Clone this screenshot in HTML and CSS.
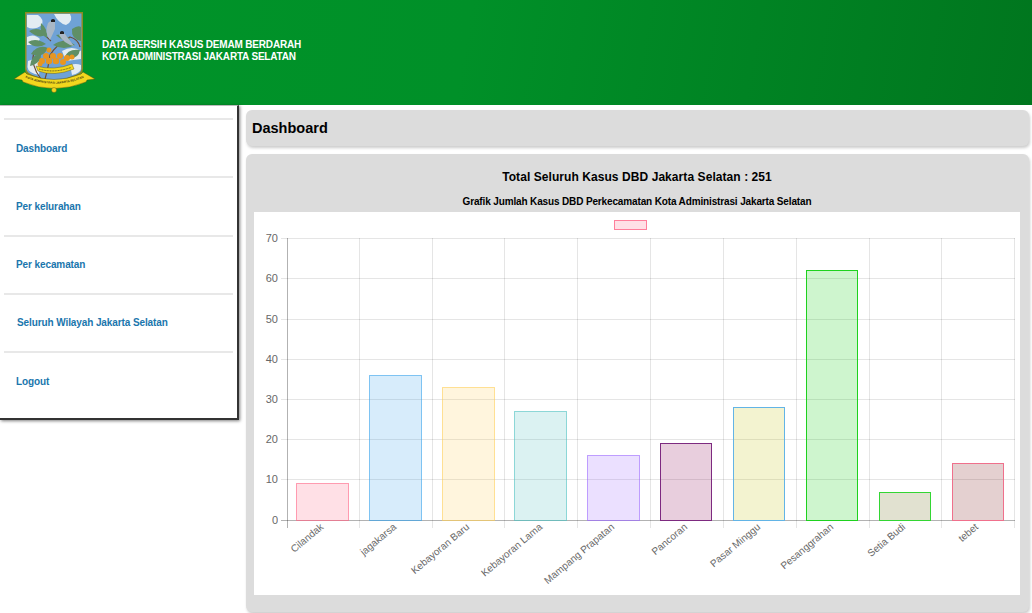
FILE: index.html
```html
<!DOCTYPE html>
<html lang="en">
<head>
  <meta charset="UTF-8" />
  <meta name="viewport" content="width=device-width, initial-scale=1.0" />
  <title>Data Bersih Kasus Demam Berdarah</title>
  <link rel="stylesheet" href="styles.css">
</head>
<body>
  <header class="topbar">
    <svg class="logo" width="82" height="84" viewBox="0 0 82 84">
      <path class="logo-shield" d="M11 1 H69 V58 Q69 65 58 67 L40 73 L22 67 Q11 65 11 58 Z" />
      <path class="logo-sky" d="M12.5 2.5 H67.5 V58 Q67.5 63 57 65.5 L40 71 L23 65.5 Q12.5 63 12.5 58 Z" />
      <path class="logo-cloud" d="M13 4 H24 Q30 8 28 14 Q20 20 13 16 Z M40 3 H56 Q60 10 52 14 Q44 12 40 3 Z M13 26 Q20 22 26 28 L22 34 H13 Z M48 40 Q58 34 67 40 V48 L52 50 Z M14 50 Q22 46 26 52 L25 64 Q14 62 13.500 56 Z M56 54 Q62 52 67 54 V58 Q66 62 58 64 Z" />
      <path class="logo-ring" d="M27 68 Q16 54 20 40 M31 68 Q34 58 36 44 Q42 34 56 26 Q64 28 66 36 M37 30 Q32 26 30 22" />
      <path class="logo-leaf" d="M15 20 Q24 15 33 23 Q25 29 15 20 Z M27 12 Q34 18 33 27 Q25 23 27 12 Z M14 31 Q22 26 32 33 Q22 39 14 31 Z M17 43 Q24 33 34 37 Q29 48 17 43 Z M16 55 Q17 44 27 42 Q28 52 16 55 Z M42 24 Q50 22 56 28 Q50 32 42 24 Z M39 34 Q50 26 61 34 Q50 40 39 34 Z M50 47 Q54 37 66 39 Q64 50 50 47 Z M58 18 Q64 14 67 16 L67 30 Q57 28 58 18 Z" />
      <path class="logo-bird" d="M34 12 Q38 8 41 11 L41 18 L36 29 Q30 22 34 12 Z M45 24 Q48 20 51 23 L60 35 Q50 33 45 24 Z" />
      <path class="logo-head" d="M37 9 Q39 7 41 9 V11 H37 Z M46 21 Q48 19 50 21 V23 H46 Z" />
      <g class="logo-fruit">
        <circle cx="35" cy="39" r="2.500" /><circle cx="32" cy="45" r="3" /><circle cx="39" cy="45" r="3" />
        <circle cx="46" cy="45" r="3" /><circle cx="53" cy="47" r="3" /><circle cx="58" cy="46" r="2.500" />
        <circle cx="28" cy="50" r="3" /><circle cx="35" cy="50" r="3.200" /><circle cx="42" cy="50" r="3.200" />
        <circle cx="49" cy="51" r="3" /><circle cx="26" cy="53" r="2.500" />
      </g>
      <path class="logo-ribbon" d="M22 55 Q40 60 58 53 L60 58 Q40 66 24 60 Z" />
      <path class="logo-mark" d="M25 58 Q40 62.500 57 56.500" />
      <path class="logo-ribbon" d="M0 68 L11 61 L13 63 Q40 74 67 63 L69 61 L81 68 L73 69 L72 71 Q40 84 9 71 L8 69 Z" />
      <path id="ribbonCurve" class="logo-curve" d="M11 66.500 Q40 79 70 66.500" />
      <text class="logo-motto"><textPath href="#ribbonCurve" startOffset="50%">KOTA ADMINISTRASI JAKARTA SELATAN</textPath></text>
      <circle class="logo-ribbon" cx="40" cy="79" r="2.500" />
    </svg>
    <p class="site-title">DATA BERSIH KASUS DEMAM BERDARAH<br>KOTA ADMINISTRASI JAKARTA SELATAN</p>
  </header>

  <div class="layout">
    <nav class="sidebar">
      <a class="nav-link" href="#">Dashboard</a>
      <a class="nav-link" href="#">Per kelurahan</a>
      <a class="nav-link" href="#">Per kecamatan</a>
      <a class="nav-link nav-wide" href="#">Seluruh Wilayah Jakarta Selatan</a>
      <a class="nav-link" href="#">Logout</a>
    </nav>

    <main class="content">
      <section class="panel panel-head">
        <h1>Dashboard</h1>
      </section>
      <section class="panel panel-chart">
        <h2>Total Seluruh Kasus DBD Jakarta Selatan : 251</h2>
        <h3>Grafik Jumlah Kasus DBD Perkecamatan Kota Administrasi Jakarta Selatan</h3>
        <svg class="chart" width="766" height="383" viewBox="0 0 766 383">
          <rect class="legend" x="360.5" y="8.5" width="32" height="9" />

          <path class="grid" d="M27 26.5 H761 M27 66.5 H761 M27 107.5 H761 M27 147.5 H761 M27 187.5 H761 M27 227.5 H761 M27 267.5 H761" />
          <path class="grid" d="M105.5 26 V316 M178.5 26 V316 M250.5 26 V316 M323.5 26 V316 M396.5 26 V316 M469.5 26 V316 M542.5 26 V316 M615.5 26 V316 M687.5 26 V316 M760.5 26 V316" />
          <path class="axis" d="M33.5 26 V316 M27 308.5 H761" />

          <g class="y-ticks">
            <text x="24" y="30">70</text>
            <text x="24" y="70">60</text>
            <text x="24" y="111">50</text>
            <text x="24" y="151">40</text>
            <text x="24" y="191">30</text>
            <text x="24" y="231">20</text>
            <text x="24" y="271">10</text>
            <text x="24" y="312">0</text>
          </g>

          <rect class="bar bar-1" x="42.5" y="271.5" width="52" height="37" />
          <rect class="bar bar-2" x="115.5" y="163.5" width="52" height="145" />
          <rect class="bar bar-3" x="188.5" y="175.5" width="52" height="133" />
          <rect class="bar bar-4" x="260.5" y="199.5" width="52" height="109" />
          <rect class="bar bar-5" x="333.5" y="243.5" width="52" height="65" />
          <rect class="bar bar-6" x="406.5" y="231.5" width="51" height="77" />
          <rect class="bar bar-7" x="479.5" y="195.5" width="51" height="113" />
          <rect class="bar bar-8" x="552.5" y="58.5" width="51" height="250" />
          <rect class="bar bar-9" x="625.5" y="280.5" width="51" height="28" />
          <rect class="bar bar-10" x="698.5" y="251.5" width="51" height="57" />

          <g class="x-ticks">
            <text transform="translate(70 316) rotate(-40)">Cilandak</text>
            <text transform="translate(143 316) rotate(-40)">jagakarsa</text>
            <text transform="translate(216 316) rotate(-40)">Kebayoran Baru</text>
            <text transform="translate(289 316) rotate(-40)">Kebayoran Lama</text>
            <text transform="translate(361 316) rotate(-40)">Mampang Prapatan</text>
            <text transform="translate(434 316) rotate(-40)">Pancoran</text>
            <text transform="translate(507 316) rotate(-40)">Pasar Minggu</text>
            <text transform="translate(580 316) rotate(-40)">Pesanggrahan</text>
            <text transform="translate(652 316) rotate(-40)">Setia Budi</text>
            <text transform="translate(725 316) rotate(-40)">tebet</text>
          </g>
        </svg>
      </section>
    </main>
  </div>
</body>
</html>
```

FILE: styles.css
```css
html, body {
  margin: 0;
  height: 613px;
  overflow: hidden;
  background: #fff;
  font-family: "Liberation Sans", Arial, sans-serif;
}
.topbar {
  display: flex;
  align-items: center;
  gap: 6px;
  height: 105px;
  padding-left: 14px;
  box-sizing: border-box;
  background: linear-gradient(100deg, #009429 0%, #009028 45%, #00761e 100%);
}
.logo {
  flex: none;
  margin-top: 1px;
}
.logo-shield { fill: #8c8a22; }
.logo-sky { fill: #6fa2d6; }
.logo-cloud { fill: #e3ecf2; }
.logo-ring { fill: none; stroke: #6b4a32; stroke-width: 1.2; }
.logo-leaf { fill: #5f8f66; }
.logo-bird { fill: #aab8c6; }
.logo-head { fill: #222; }
.logo-fruit { fill: #e8961f; }
.logo-ribbon { fill: #f2d71e; stroke: #4a4412; stroke-width: 0.4; }
.logo-mark { fill: none; stroke: #5a5320; stroke-width: 1; stroke-dasharray: 1 0.6; }
.logo-curve { fill: none; }
.logo-motto { font-size: 3px; font-weight: bold; fill: #3d3a10; text-anchor: middle; }
.site-title {
  margin: 0 0 4px;
  color: #fff;
  font-size: 10px;
  font-weight: bold;
  line-height: 12px;
  letter-spacing: -0.18px;
}
.layout {
  display: flex;
  align-items: flex-start;
}
.sidebar {
  flex: none;
  width: 239px;
  height: 315px;
  box-sizing: border-box;
  padding: 12px 4px 0;
  background: #fff;
  border-top: 1px solid #bbb;
  border-right: 2px solid #333;
  border-bottom: 2px solid #333;
  box-shadow: 1px 1px 3px rgba(0, 0, 0, 0.5);
}
.nav-link {
  display: block;
  height: 58.25px;
  box-sizing: border-box;
  padding: 22.5px 12px 0;
  border-top: 2px solid #e8e8e8;
  color: #1a76ad;
  font-size: 10px;
  font-weight: bold;
  letter-spacing: -0.1px;
  text-decoration: none;
}
.nav-wide {
  padding-left: 13px;
}
.content {
  flex: 1;
  min-width: 0;
  margin: 5px 3px 0 7px;
}
.panel {
  background: #dcdcdc;
  border-radius: 6px;
  box-shadow: 1px 2px 3px rgba(0, 0, 0, 0.2);
}
.panel-head {
  height: 36px;
  margin-bottom: 8px;
  padding: 10px 6px 0;
  box-sizing: border-box;
}
.panel-head h1 {
  margin: 0;
  font-size: 14.5px;
  line-height: 16px;
  color: #000;
}
.panel-chart {
  height: 458px;
  padding: 16px 9px 0 8px;
  box-sizing: border-box;
  text-align: center;
  color: #000;
}
.panel-chart h2 {
  margin: 0 0 12px;
  font-size: 12px;
  line-height: 14px;
  letter-spacing: 0.07px;
}
.panel-chart h3 {
  margin: 0 0 4px;
  font-size: 10px;
  line-height: 12px;
  letter-spacing: -0.14px;
}
.chart {
  display: block;
  background: #fff;
}
.legend {
  fill: rgba(255, 99, 132, 0.2);
  stroke: rgba(255, 99, 132, 0.8);
}
.grid {
  fill: none;
  stroke: rgba(0, 0, 0, 0.1);
}
.axis {
  fill: none;
  stroke: rgba(0, 0, 0, 0.3);
}
.y-ticks {
  opacity: 0.99;
}
.y-ticks text {
  font-size: 11px;
  fill: #666;
  text-anchor: end;
}
.x-ticks {
  opacity: 0.99;
}
.x-ticks text {
  font-size: 10px;
  fill: #666;
  text-anchor: end;
}
.bar { stroke-width: 1; }
.bar-1 { fill: rgba(255, 99, 132, 0.2); stroke: rgba(255, 99, 132, 0.6); }
.bar-2 { fill: rgba(54, 162, 235, 0.2); stroke: rgba(54, 162, 235, 0.6); }
.bar-3 { fill: rgba(255, 206, 86, 0.2); stroke: rgba(255, 206, 86, 0.6); }
.bar-4 { fill: rgba(75, 192, 192, 0.2); stroke: rgba(75, 192, 192, 0.6); }
.bar-5 { fill: rgba(153, 102, 255, 0.2); stroke: rgba(153, 102, 255, 0.6); }
.bar-6 { fill: rgba(150, 30, 100, 0.22); stroke: #7d2a80; }
.bar-7 { fill: rgba(200, 200, 40, 0.22); stroke: #62b4e6; }
.bar-8 { fill: rgba(30, 210, 30, 0.22); stroke: #1ed21e; }
.bar-9 { fill: rgba(120, 120, 40, 0.22); stroke: #33d633; }
.bar-10 { fill: rgba(130, 40, 40, 0.22); stroke: #f0708c; }
```
